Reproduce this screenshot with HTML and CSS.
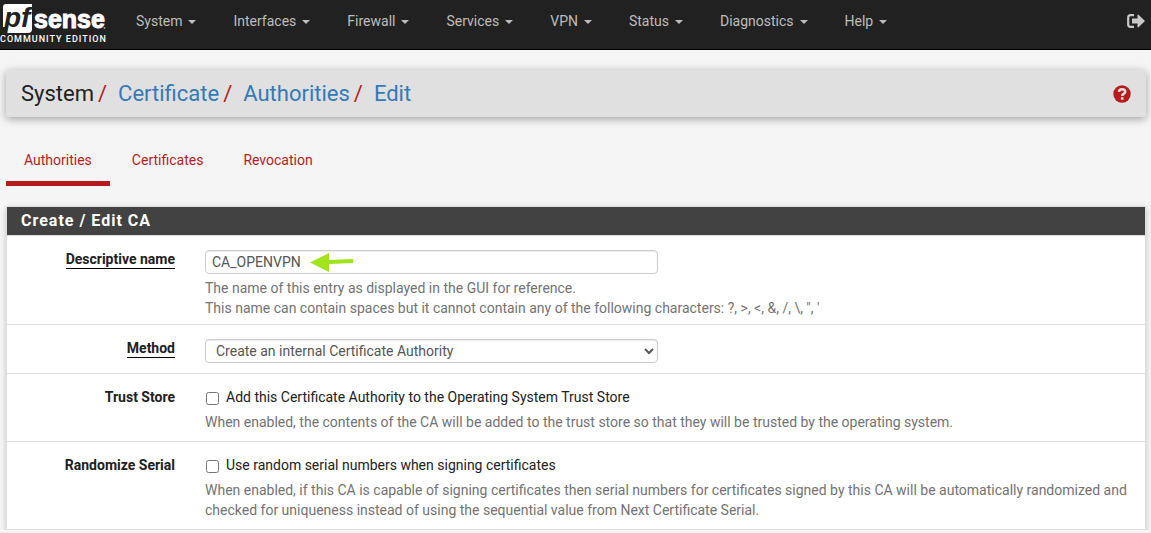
FILE: index.html
```html
<!DOCTYPE html>
<html lang="en">
<head>
<meta charset="utf-8">
<title>System: Certificate: Authorities: Edit</title>
<link rel="stylesheet" href="styles.css">
</head>
<body>
<header class="navbar">
  <a class="brand" href="#" aria-label="pfSense Community Edition">
    <svg class="logo" width="108" height="33" viewBox="0 0 108 33">
      <path d="M3 27V7q0-3 3-3h26v25q0 4-4 4H6z" fill="#fff"/>
      <path d="M2 27h4.500L5 33H2z" fill="#212121"/>
      <text class="logo-pf" x="4" y="27">pf</text>
      <text class="logo-sense" x="34" y="28">sense</text>
      <circle cx="104.500" cy="28" r="1" fill="#999"/>
    </svg>
    <span class="edition">COMMUNITY EDITION</span>
  </a>
  <nav class="menu">
    <a href="#">System<span class="caret"></span></a>
    <a href="#">Interfaces<span class="caret"></span></a>
    <a href="#">Firewall<span class="caret"></span></a>
    <a href="#">Services<span class="caret"></span></a>
    <a href="#">VPN<span class="caret"></span></a>
    <a href="#">Status<span class="caret"></span></a>
    <a href="#">Diagnostics<span class="caret"></span></a>
    <a href="#">Help<span class="caret"></span></a>
  </nav>
  <a class="logout" href="#" aria-label="Logout">
    <svg width="18" height="14" viewBox="0 0 18 14"><path d="M7 1.200H3.500Q1.200 1.200 1.200 3.500v7q0 2.300 2.300 2.300H7" fill="none" stroke="#c8c8c8" stroke-width="2.200"/><path d="M5 4.500h5.500V1.200q0-1 1-.4l6 5.600q.6.600 0 1.200l-6 5.600q-1 .6-1-.4V9.500H5z" fill="#c8c8c8"/></svg>
  </a>
</header>
<main class="page">
  <div class="titlebar">
    <ol class="crumbs">
      <li>System</li>
      <li><a href="#">Certificate</a></li>
      <li><a href="#">Authorities</a></li>
      <li><a href="#">Edit</a></li>
    </ol>
    <a class="help" href="#" aria-label="Help for this page">
      <svg width="18" height="18" viewBox="0 0 18 18"><circle cx="9" cy="9" r="8.700" fill="#b71c1c"/><path d="M5.800 6.800Q6.300 4.200 9 4.200q3.200 0 3.200 2.500 0 1.300-1.600 2.200Q9.200 9.600 9.200 11" fill="none" stroke="#e0e0e0" stroke-width="2.600"/><path d="M7.900 12.200h2.600v2.500H7.900z" fill="#e0e0e0"/></svg>
    </a>
  </div>
  <nav class="tabs">
    <a class="active" href="#">Authorities</a>
    <a href="#">Certificates</a>
    <a href="#">Revocation</a>
  </nav>
  <form class="panel">
    <h2 class="panel-title">Create / Edit CA</h2>
    <div class="row row-name">
      <label class="name" for="descr"><span class="required">Descriptive name</span></label>
      <div class="field">
        <div class="entry">
          <input class="control" id="descr" type="text" value="CA_OPENVPN">
          <svg class="arrow" width="43" height="20" viewBox="0 0 43 20"><path d="M0 10.500L19 1v7l24-1v4l-24 1v8z" fill="#a1e41c"/></svg>
        </div>
        <p class="hint">The name of this entry as displayed in the GUI for reference.<br>This name can contain spaces but it cannot contain any of the following characters: ?, &gt;, &lt;, &amp;, /, \, ", '</p>
      </div>
    </div>
    <div class="row row-method">
      <label class="name" for="method"><span class="required">Method</span></label>
      <div class="field">
        <select class="control" id="method"><option>Create an internal Certificate Authority</option></select>
      </div>
    </div>
    <div class="row row-check">
      <span class="name">Trust Store</span>
      <div class="field">
        <label class="check"><input type="checkbox">Add this Certificate Authority to the Operating System Trust Store</label>
        <p class="hint">When enabled, the contents of the CA will be added to the trust store so that they will be trusted by the operating system.</p>
      </div>
    </div>
    <div class="row row-check">
      <span class="name">Randomize Serial</span>
      <div class="field">
        <label class="check"><input type="checkbox">Use random serial numbers when signing certificates</label>
        <p class="hint">When enabled, if this CA is capable of signing certificates then serial numbers for certificates signed by this CA will be automatically randomized and checked for uniqueness instead of using the sequential value from Next Certificate Serial.</p>
      </div>
    </div>
  </form>
</main>
</body>
</html>
```
FILE: styles.css
```css
* { box-sizing: border-box; }
html { overflow: hidden; }
body {
  margin: 0;
  background: #f5f5f5;
  color: #212121;
  font: 14px/20px Roboto, sans-serif;
}
a { color: #337ab7; text-decoration: none; }

.navbar {
  display: flex;
  align-items: flex-start;
  height: 50px;
  background: #212121;
  border-bottom: 1px solid #000;
}
.brand { width: 117px; color: #fff; }
.logo { display: block; }
.logo-pf { font: italic bold 28px "Liberation Sans", sans-serif; fill: #212121; }
.logo-sense { font: bold 25px "Liberation Sans", sans-serif; fill: #fff; stroke: #fff; stroke-width: 1px; }
.edition { display: block; font-size: 9px; line-height: 12px; font-weight: 500; letter-spacing: 1px; white-space: nowrap; }
.menu { display: flex; flex: 1; }
.menu a { padding: 11px 19px; color: #bdbdbd; }
.menu a + a { padding-left: 18px; }
.caret {
  display: inline-block;
  margin-left: 6px;
  vertical-align: middle;
  border: 4px solid transparent;
  border-top-color: #bdbdbd;
  border-bottom: 0;
}
.logout { padding: 14px 6px; line-height: 0; }

.page { padding: 20px 5px 0 6px; }
.titlebar {
  display: flex;
  align-items: center;
  justify-content: space-between;
  height: 47px;
  padding: 0 15px;
  background: #e0e0e0;
  border-radius: 2px;
  box-shadow: 0 2px 8px rgba(0, 0, 0, .35);
}
.crumbs { display: flex; margin: 0; padding: 0; list-style: none; font-size: 22px; line-height: 30px; }
.crumbs li + li::before { content: "/"; padding: 0 11px 0 4px; color: #b71c1c; }
.help { line-height: 0; }

.tabs { display: flex; gap: 4px; margin-top: 33px; }
.tabs a { padding: 0 18px 11px; border-bottom: 5px solid transparent; color: #b71c1c; }
.tabs .active { border-color: #b71c1c; }

.panel {
  margin-top: 20px;
  background: #fff;
  border: 1px solid #ddd;
  box-shadow: 0 2px 6px rgba(0, 0, 0, .2);
}
.panel-title {
  margin: 0;
  padding: 4px 14px;
  background: #424242;
  color: #fff;
  font-size: 16px;
  line-height: 20px;
  letter-spacing: 1px;
}
.row { display: grid; grid-template-columns: 168px 1fr; gap: 30px; padding: 13px 16px 0 0; border-top: 1px solid #ddd; }
.name { text-align: right; font-weight: 700; }
.required { display: inline-block; line-height: 17px; border-bottom: 1px solid #000; }
.row-name { padding-bottom: 6px; }
.row-method { padding-bottom: 10px; }
.row-check { padding-bottom: 9px; }
.control {
  display: block;
  width: 49%;
  height: 24px;
  margin: 0;
  padding: 0 6px;
  border: 1px solid #ccc;
  border-radius: 4px;
  background: #fff;
  color: #555;
  font: inherit;
  box-shadow: inset 0 1px 1px rgba(0, 0, 0, .08);
}
.row-name .field, .row-method .field { padding-top: 1px; }
.entry { position: relative; }
.arrow { position: absolute; left: 105px; top: 2px; }
.hint { margin: 4px 0 0; color: #737373; }
.check { display: flex; align-items: center; gap: 7px; }
.check input { width: 13px; height: 13px; margin: 2px 0 0 1px; }
.row-check .hint { margin-top: 5px; }
```
